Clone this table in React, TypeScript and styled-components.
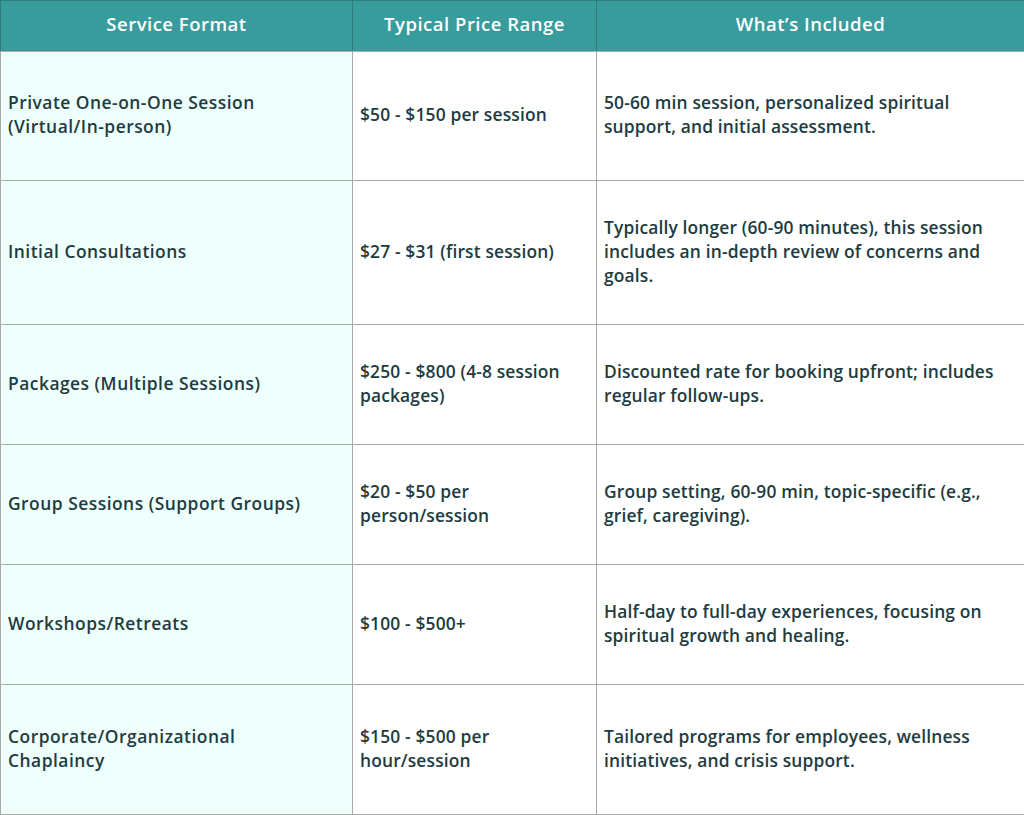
import React from "react";
import styled, { createGlobalStyle } from "styled-components";

const GlobalStyle = createGlobalStyle`
  html, body {
    margin: 0;
    padding: 0;
    background: #ffffff;
  }
  body {
    font-family: 'Open Sans', 'Noto Sans', sans-serif;
  }
`;

const Table = styled.table`
  width: 1024px;
  border-collapse: collapse;
  table-layout: fixed;
  border: 1px solid #a9a9a9;
  border-top: 1px solid #2d7f7f;
`;

const HeadCell = styled.th<{ $w: number }>`
  width: ${(p) => p.$w}px;
  height: 51px;
  padding: 0 8px 5px;
  background: #389c9c;
  color: #ffffff;
  font-size: 18.5px;
  font-weight: 600;
  letter-spacing: 0.5px;
  text-align: center;
  border-left: 1px solid #2b7b7b;
  border-bottom: 1px solid #a9a9a9;
  box-sizing: border-box;
`;

const Row = styled.tr<{ $h: number }>`
  height: ${(p) => p.$h}px;
`;

const Cell = styled.td<{ $first?: boolean; $padR: number }>`
  padding: 0 ${(p) => p.$padR}px 4px 7px;
  vertical-align: middle;
  background: ${(p) => (p.$first ? "#effffb" : "#ffffff")};
  color: #213b41;
  font-size: 17.4px;
  font-weight: 600;
  letter-spacing: ${(p) => (p.$first ? 0.5 : 0.15)}px;
  line-height: 24px;
  border: 1px solid #a9a9a9;
  box-sizing: border-box;
`;

const rows = [
  {
    h: 129,
    format: "Private One-on-One Session (Virtual/In-person)",
    price: "$50 - $150 per session",
    incl: "50-60 min session, personalized spiritual support, and initial assessment.",
  },
  {
    h: 144,
    format: "Initial Consultations",
    price: "$27 - $31 (first session)",
    incl: "Typically longer (60-90 minutes), this session includes an in-depth review of concerns and goals.",
  },
  {
    h: 120,
    format: "Packages (Multiple Sessions)",
    price: "$250 - $800 (4-8 session packages)",
    incl: "Discounted rate for booking upfront; includes regular follow-ups.",
  },
  {
    h: 120,
    format: "Group Sessions (Support Groups)",
    price: "$20 - $50 per person/session",
    incl: "Group setting, 60-90 min, topic-specific (e.g., grief, caregiving).",
  },
  {
    h: 120,
    format: "Workshops/Retreats",
    price: "$100 - $500+",
    incl: "Half-day to full-day experiences, focusing on spiritual growth and healing.",
  },
  {
    h: 130,
    format: "Corporate/Organizational Chaplaincy",
    price: "$150 - $500 per hour/session",
    incl: "Tailored programs for employees, wellness initiatives, and crisis support.",
  },
];

export default function App() {
  return (
    <>
      <GlobalStyle />
      <Table>
        <thead>
          <tr>
            <HeadCell $w={352}>Service Format</HeadCell>
            <HeadCell $w={244}>Typical Price Range</HeadCell>
            <HeadCell $w={428}>What’s Included</HeadCell>
          </tr>
        </thead>
        <tbody>
          {rows.map((r) => (
            <Row key={r.format} $h={r.h}>
              <Cell $first $padR={24}>{r.format}</Cell>
              <Cell $padR={20}>{r.price}</Cell>
              <Cell $padR={22}>{r.incl}</Cell>
            </Row>
          ))}
        </tbody>
      </Table>
    </>
  );
}
